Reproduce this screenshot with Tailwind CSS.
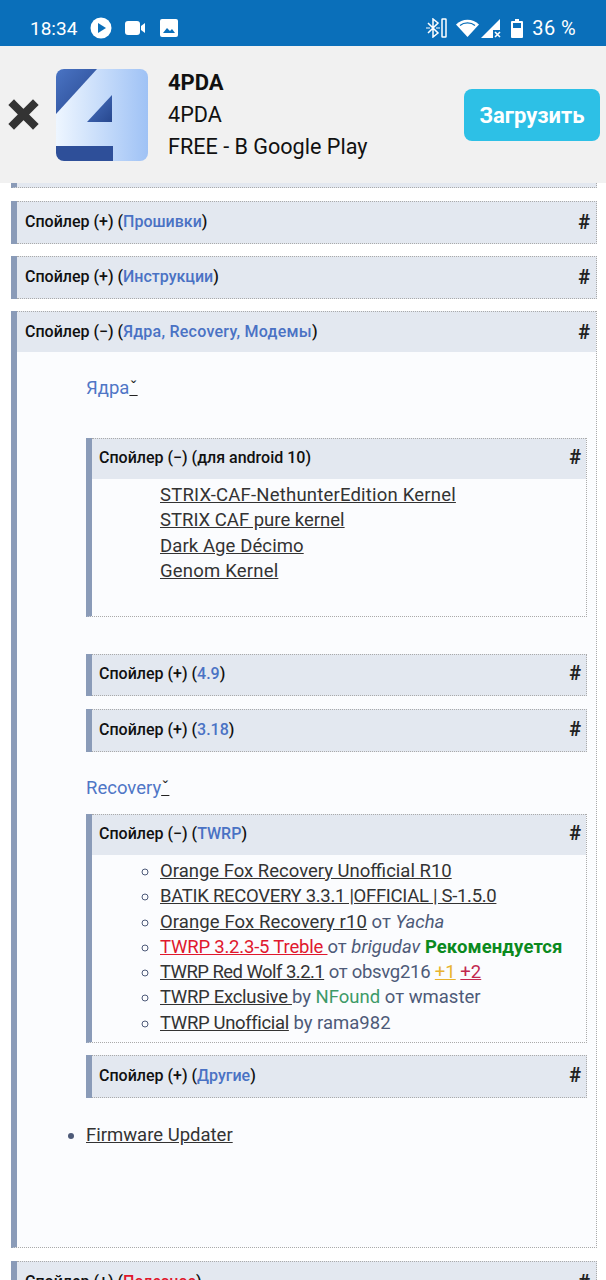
<!DOCTYPE html>
<html lang="ru">
<head>
  <meta charset="UTF-8" />
  <meta name="viewport" content="width=device-width, initial-scale=1.0" />
  <title>4PDA</title>
  <script src="https://cdn.jsdelivr.net/npm/@tailwindcss/browser@4"></script>
</head>
<body class="w-[606px] h-[1280px] overflow-hidden bg-white font-['Roboto',sans-serif] text-[#4d5a78]">

  <!-- Status bar -->
  <div class="h-[46px] bg-[#0a6fba] text-white flex items-center pl-[30px] pr-[30px] pt-[10px]">
    <span class="text-[19px] leading-none">18:34</span>
    <svg class="ml-[13px] w-[22px] h-[22px]" viewBox="0 0 22 22"><circle cx="11" cy="11" r="10.5" fill="#fff"/><path d="M8 6l8 5-8 5z" fill="#0a6fba"/></svg>
    <svg class="ml-[13px] w-[21px] h-[14px]" viewBox="0 0 21 14"><rect x="0" y="0" width="15" height="14" rx="3" fill="#fff"/><path d="M16 5l4-3v10l-4-3z" fill="#fff"/></svg>
    <svg class="ml-[14px] w-[18px] h-[18px]" viewBox="0 0 18 18"><rect width="18" height="18" rx="2" fill="#fff"/><path d="M3 14l4-5 3 3 2-2 3 4z" fill="#0a6fba"/></svg>
    <div class="ml-auto flex items-center">
      <svg class="w-[22px] h-[20px]" viewBox="0 0 22 20" fill="none" stroke="#fff" stroke-width="1.5"><path d="M2 5l10 10-5 4V1l5 4L2 15"/><path d="M0 10h4M10 10h4" stroke-width="1.200"/><rect x="16" y="1" width="4" height="18" rx="0.5"/></svg>
      <svg class="ml-[8px] w-[23px] h-[18px]" viewBox="0 0 23 18"><path d="M0 5.5C6 -1 17 -1 23 5.5L11.500 18z" fill="#fff"/><path d="M4 6.500C8 3 15 3 19 6.500" stroke="#0a6fba" stroke-width="1.200" fill="none"/></svg>
      <svg class="ml-[2px] w-[20px] h-[19px]" viewBox="0 0 20 19"><path d="M19 0L0 19h12V11h7z" fill="#fff"/><path d="M14 13l5 5M19 13l-5 5" stroke="#fff" stroke-width="1.600"/></svg>
      <svg class="ml-[10px] w-[12px] h-[19px]" viewBox="0 0 12 19"><path d="M4 0h4v2h3a1 1 0 011 1v15a1 1 0 01-1 1H1a1 1 0 01-1-1V3a1 1 0 011-1h3z" fill="#fff"/><rect x="2" y="4" width="8" height="5" fill="#0a6fba"/></svg>
      <span class="ml-[9px] text-[20px] leading-none tracking-[0.4px]">36 %</span>
    </div>
  </div>

  <!-- App banner -->
  <div class="h-[137px] bg-[#f1f1f1] flex items-center relative z-10">
    <svg class="ml-[8px] w-[31px] h-[31px]" viewBox="0 0 31 31"><path d="M6 6l19 19M25 6L6 25" stroke="#333" stroke-width="8" stroke-linecap="square"/></svg>
    <svg class="ml-[17px] w-[92px] h-[92px]" viewBox="0 0 92 92">
      <defs>
        <linearGradient id="bg4" x1="0" x2="1" y1="0" y2="0"><stop offset="0" stop-color="#eef6ff"/><stop offset="1" stop-color="#9fc2f5"/></linearGradient>
        <linearGradient id="bl4" x1="0" x2="1" y1="0" y2="1"><stop offset="0" stop-color="#4a74c4"/><stop offset="1" stop-color="#27478e"/></linearGradient>
      </defs>
      <rect width="92" height="92" rx="8" fill="url(#bg4)"/>
      <path d="M8 0H41L0 45V8a8 8 0 018-8z" fill="url(#bl4)"/>
      <path d="M56 26V53H31z" fill="url(#bl4)"/>
      <path d="M0 77H57V92H8a8 8 0 01-8-8z" fill="#2e4f99"/>
    </svg>
    <div class="ml-[20px] text-[21.600px] leading-[32px] text-[#111]">
      <div class="font-bold text-[22px]">4PDA</div>
      <div>4PDA</div>
      <div>FREE - В Google Play</div>
    </div>
    <div class="absolute left-[464px] top-[43px] w-[136px] h-[52px] rounded-[8px] bg-[#2dc0e6] text-white font-bold text-[22px] flex items-center justify-center">Загрузить</div>
  </div>

  <!-- Page -->
  <div class="pl-[11px] pr-[9px]">
    <div class="h-[5px] bg-[#e3e8f0] border-b border-r border-dotted border-[#aaa] border-l-[6px] border-l-[#8a9bb8] [border-left-style:solid]"></div>

    <div class="mt-[13px] border-l-[6px] border-l-[#8a9bb8]">
      <div class="h-[43px] bg-[#e3e8f0] border-y border-r border-dotted border-[#aaa] flex items-center justify-between pl-[8px] pr-[6px] pb-[2px] text-[16px] font-medium text-[#111]"><span>Спойлер (+) (<b class="text-[#4a72c4] font-medium">Прошивки</b>)</span><b class="text-[20px] text-[#222]">#</b></div>
    </div>

    <div class="mt-[12px] border-l-[6px] border-l-[#8a9bb8]">
      <div class="h-[43px] bg-[#e3e8f0] border-y border-r border-dotted border-[#aaa] flex items-center justify-between pl-[8px] pr-[6px] pb-[2px] text-[16px] font-medium text-[#111]"><span>Спойлер (+) (<b class="text-[#4a72c4] font-medium">Инструкции</b>)</span><b class="text-[20px] text-[#222]">#</b></div>
    </div>

    <div class="mt-[12px] h-[937px] border-l-[6px] border-r border-b border-dotted border-[#aaa] border-l-[#8a9bb8] [border-left-style:solid] bg-[#fbfcfe]">
      <div class="h-[41px] bg-[#e3e8f0] border-t border-dotted border-[#aaa] flex items-center justify-between pl-[8px] pr-[6px] text-[16px] font-medium text-[#111]"><span>Спойлер (−) (<b class="text-[#4a72c4] font-medium tracking-[0.25px]">Ядра, Recovery, Модемы</b>)</span><b class="text-[20px] text-[#222]">#</b></div>

      <div class="pl-[69px] pr-[9px]">
        <div class="mt-[24px] h-[24px] text-[18.500px] leading-[24px] text-[#4f76c6]">Ядра<span class="underline text-[#222]">ˇ</span></div>

        <div class="mt-[38px] h-[179px] border-l-[6px] border-r border-b border-dotted border-[#aaa] border-l-[#8a9bb8] [border-left-style:solid]">
          <div class="h-[41px] bg-[#e3e8f0] border-t border-dotted border-[#aaa] flex items-center justify-between pl-[7px] pr-[5px] pb-[2px] text-[16px] font-medium text-[#111]"><span>Спойлер (−) (для android 10)</span><b class="text-[20px] text-[#222] mb-[2px]">#</b></div>
          <div class="pl-[68px] pt-[4px] text-[18.500px] leading-[25.400px] text-[#333]">
            <div><a class="underline tracking-[0.2px]">STRIX-CAF-NethunterEdition Kernel</a></div>
            <div><a class="underline">STRIX CAF pure kernel</a></div>
            <div><a class="underline tracking-[0.1px]">Dark Age Décimo</a></div>
            <div><a class="underline tracking-[0.2px]">Genom Kernel</a></div>
          </div>
        </div>

        <div class="mt-[37px] border-l-[6px] border-l-[#8a9bb8]">
          <div class="h-[42px] bg-[#e3e8f0] border-y border-r border-dotted border-[#aaa] flex items-center justify-between pl-[7px] pr-[5px] pb-[2px] text-[16px] font-medium text-[#111]"><span>Спойлер (+) (<b class="text-[#4a72c4] font-medium">4.9</b>)</span><b class="text-[20px] text-[#222] mb-[2px]">#</b></div>
        </div>
        <div class="mt-[13px] border-l-[6px] border-l-[#8a9bb8]">
          <div class="h-[43px] bg-[#e3e8f0] border-y border-r border-dotted border-[#aaa] flex items-center justify-between pl-[7px] pr-[5px] pb-[2px] text-[16px] font-medium text-[#111]"><span>Спойлер (+) (<b class="text-[#4a72c4] font-medium">3.18</b>)</span><b class="text-[20px] text-[#222] mb-[2px]">#</b></div>
        </div>

        <div class="mt-[24px] h-[24px] text-[18.500px] leading-[24px] text-[#4f76c6]">Recovery<span class="underline text-[#222]">ˇ</span></div>

        <div class="mt-[14px] h-[229px] border-l-[6px] border-r border-b border-dotted border-[#aaa] border-l-[#8a9bb8] [border-left-style:solid]">
          <div class="h-[41px] bg-[#e3e8f0] border-t border-dotted border-[#aaa] flex items-center justify-between pl-[7px] pr-[5px] pb-[2px] text-[16px] font-medium text-[#111]"><span>Спойлер (−) (<b class="text-[#4a72c4] font-medium">TWRP</b>)</span><b class="text-[20px] text-[#222] mb-[2px]">#</b></div>
          <ul class="list-[circle] pl-[68px] pt-[4px] text-[18.500px] leading-[25.300px]">
            <li><a class="underline text-[#333]">Orange Fox Recovery Unofficial R10</a></li>
            <li><a class="underline text-[#333] tracking-[-0.3px]">BATIK RECOVERY 3.3.1 |OFFICIAL | S-1.5.0</a></li>
            <li><a class="underline text-[#333] tracking-[0.1px]">Orange Fox Recovery r10</a> от <i>Yacha</i></li>
            <li><a class="underline text-[#e0182d] tracking-[-0.2px]">TWRP 3.2.3-5 Treble </a> от <i>brigudav</i> <b class="text-[#0b8a1e] tracking-[0.1px]">Рекомендуется</b></li>
            <li><a class="underline text-[#333] tracking-[-0.55px]">TWRP Red Wolf 3.2.1</a> <span class="tracking-[-0.3px]">от obsvg216</span> <a class="underline text-[#e8b32e]">+1</a> <a class="underline text-[#c2284f]">+2</a></li>
            <li><a class="underline text-[#333] tracking-[-0.3px]">TWRP Exclusive </a>by <span class="text-[#3d9a68]">NFound</span> от wmaster</li>
            <li><a class="underline text-[#333] tracking-[-0.35px]">TWRP Unofficial</a> by rama982</li>
          </ul>
        </div>

        <div class="mt-[12px] border-l-[6px] border-l-[#8a9bb8]">
          <div class="h-[43px] bg-[#e3e8f0] border-y border-r border-dotted border-[#aaa] flex items-center justify-between pl-[7px] pr-[5px] pb-[2px] text-[16px] font-medium text-[#111]"><span>Спойлер (+) (<b class="text-[#4a72c4] font-medium">Другие</b>)</span><b class="text-[20px] text-[#222] mb-[2px]">#</b></div>
        </div>

        <ul class="list-disc mt-[25px] text-[18.500px] leading-[25px]">
          <li><a class="underline text-[#333]">Firmware Updater</a></li>
        </ul>
      </div>
    </div>

    <div class="mt-[13px] border-l-[6px] border-l-[#8a9bb8]">
      <div class="h-[43px] bg-[#e3e8f0] border-y border-r border-dotted border-[#aaa] flex items-center justify-between pl-[8px] pr-[6px] pb-[2px] text-[16px] font-medium text-[#111]"><span>Спойлер (+) (<b class="text-[#e0182d] font-medium">Полезное</b>)</span><b class="text-[20px] text-[#222]">#</b></div>
    </div>
  </div>
</body>
</html>
